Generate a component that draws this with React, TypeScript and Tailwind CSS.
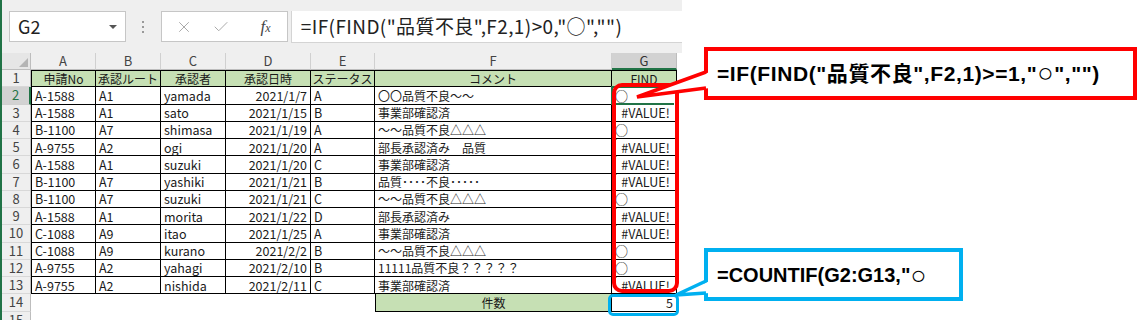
import React from 'react';
import { X, Check } from 'lucide-react';

// column widths in px, in the order A..G
const COLS = [
  { key: 'A', w: 'w-[65px]' },
  { key: 'B', w: 'w-[65px]' },
  { key: 'C', w: 'w-[65px]' },
  { key: 'D', w: 'w-[85px]' },
  { key: 'E', w: 'w-[64px]' },
  { key: 'F', w: 'w-[237px]' },
  { key: 'G', w: 'w-[65px]' },
];

const HEAD = ['申請No', '承認ルート', '承認者', '承認日時', 'ステータス', 'コメント', 'FIND'];

const ROWS: string[][] = [
  ['A-1588', 'A1', 'yamada', '2021/1/7', 'A', '〇〇品質不良～～', '○'],
  ['A-1588', 'A1', 'sato', '2021/1/15', 'B', '事業部確認済', '#VALUE!'],
  ['B-1100', 'A7', 'shimasa', '2021/1/19', 'A', '～～品質不良△△△', '○'],
  ['A-9755', 'A2', 'ogi', '2021/1/20', 'A', '部長承認済み　品質', '#VALUE!'],
  ['A-1588', 'A1', 'suzuki', '2021/1/20', 'C', '事業部確認済', '#VALUE!'],
  ['B-1100', 'A7', 'yashiki', '2021/1/21', 'B', '品質････不良･････', '#VALUE!'],
  ['B-1100', 'A7', 'suzuki', '2021/1/21', 'C', '～～品質不良△△△', '○'],
  ['A-1588', 'A1', 'morita', '2021/1/22', 'D', '部長承認済み', '#VALUE!'],
  ['C-1088', 'A9', 'itao', '2021/1/25', 'A', '事業部確認済', '#VALUE!'],
  ['C-1088', 'A9', 'kurano', '2021/2/2', 'B', '～～品質不良△△△', '○'],
  ['A-9755', 'A2', 'yahagi', '2021/2/10', 'B', '11111品質不良？？？？？', '○'],
  ['A-9755', 'A2', 'nishida', '2021/2/11', 'C', '事業部確認済', '#VALUE!'],
];

const FormulaBar = () => (
  <div className="h-[53px] bg-[#efefef] flex items-start pt-[11px] pl-[7px]">
    <div className="w-[117px] h-[31px] bg-white border border-[#c6c6c6] flex items-center justify-between pl-[8px] pr-[8px]">
      <span className="text-[18px] text-[#222]">G2</span>
      <span className="w-0 h-0 border-l-[4px] border-r-[4px] border-t-[4px] border-l-transparent border-r-transparent border-t-[#555]" />
    </div>
    <div className="w-[36px] h-[31px] flex flex-col items-center justify-center gap-[3px]">
      <span className="w-[2px] h-[2px] bg-[#999]" />
      <span className="w-[2px] h-[2px] bg-[#999]" />
      <span className="w-[2px] h-[2px] bg-[#999]" />
    </div>
    <div className="w-[127px] h-[31px] bg-white border border-[#c6c6c6] flex items-center">
      <div className="w-[40px] flex justify-center pl-[3px]">
        <X size={18} strokeWidth={1.3} color="#a8a8a8" />
      </div>
      <div className="w-[38px] flex justify-center">
        <Check size={18} strokeWidth={1.3} color="#a8a8a8" />
      </div>
      <div className="flex-1 flex justify-center pl-[4px] font-['Liberation_Serif',serif] italic text-[#444]">
        <span className="text-[17px]">f</span>
        <span className="text-[12px] mt-[5px]">x</span>
      </div>
    </div>
    <div className="ml-[3px] w-[393px] h-[32px] bg-white border-l border-b border-[#d4d4d4] flex items-center pl-[9px] text-[19px] tracking-[0.4px] text-[#222] whitespace-nowrap">
      =IF(FIND("品質不良",F2,1)&gt;0,"○","")
    </div>
  </div>
);

const ColHeader = () => (
  <div className="flex h-[17px] text-[13px] leading-[16px] text-[#444]">
    <div className="w-[29px] bg-[#e6e6e6] border-r border-b border-[#bdbdbd] relative">
      <svg className="absolute right-[2px] bottom-[2px]" width="9" height="9" viewBox="0 0 9 9">
        <polygon points="9,0 9,9 0,9" fill="#b4b4b4" />
      </svg>
    </div>
    {COLS.map((c) =>
      c.key === 'G' ? (
        <div key={c.key} className={`${c.w} bg-[#d2d2d2] border-r border-[#bdbdbd] border-b-2 border-b-[#217346] flex items-center justify-center text-[#333]`}>
          {c.key}
        </div>
      ) : (
        <div key={c.key} className={`${c.w} bg-[#efefef] border-r border-b border-[#d0d0d0] border-b-[#bdbdbd] flex items-center justify-center`}>
          {c.key}
        </div>
      )
    )}
  </div>
);

const RowHead = ({ n, selected }: { n: number; selected?: boolean }) =>
  selected ? (
    <div className="w-[29px] shrink-0 bg-[#d2d2d2] border-r-2 border-r-[#217346] border-b border-b-[#d0d0d0] flex items-center justify-center text-[13px] leading-[16px] text-[#217346]">
      {n}
    </div>
  ) : (
    <div className="w-[29px] shrink-0 bg-[#efefef] border-r border-r-[#bdbdbd] border-b border-b-[#d8d8d8] flex items-center justify-center text-[13px] leading-[16px] text-[#444]">
      {n}
    </div>
  );

const ErrFlag = () => (
  <svg className="absolute left-0 top-0" width="5" height="5" viewBox="0 0 5 5">
    <polygon points="0,0 5,0 0,5" fill="#1e7d32" />
  </svg>
);

export default function App() {
  return (
    <div className="w-[1140px] h-[320px] bg-white relative overflow-hidden font-['Noto_Sans_CJK_JP','Noto_Sans',sans-serif]">
      <div className="w-[682px] flex">
        <div className="w-[2px] h-[320px] bg-[#217346] shrink-0" />
        <div className="w-[680px]">
          <FormulaBar />
          <ColHeader />

          {/* row 1: headings */}
          <div className="flex h-[17.25px] text-[12px] leading-[15px] text-[#1a1a1a]">
            <RowHead n={1} />
            {COLS.map((c, i) => (
              <div
                key={c.key}
                className={`${c.w} bg-[#c6e0b4] border-t border-r border-b border-black ${i === 0 ? 'border-l' : ''} flex items-center justify-center whitespace-nowrap`}
              >
                {HEAD[i]}
              </div>
            ))}
          </div>

          {ROWS.map((r, ri) => (
            <div key={ri} className="flex h-[17.25px] text-[12.5px] leading-[15px] text-[#1a1a1a]">
              <RowHead n={ri + 2} selected={ri === 0} />
              {COLS.map((c, i) => {
                const v = r[i];
                const err = v === '#VALUE!';
                const align = i === 3 ? 'justify-end pr-[3px]' : err ? 'justify-center pl-[3px]' : 'justify-start pl-[3px]';
                return (
                  <div
                    key={c.key}
                    className={`${c.w} relative border-r border-b border-black ${i === 0 ? 'border-l' : ''} ${i === 5 ? 'text-[12px]' : ''} flex items-center ${align} whitespace-nowrap`}
                  >
                    {err && ri !== 1 && <ErrFlag />}
                    {v === '○' ? <span className="text-[13px]">○</span> : v}
                  </div>
                );
              })}
            </div>
          ))}

          {/* row 14: count */}
          <div className="flex h-[17.25px] text-[12px] leading-[15px] text-[#1a1a1a]">
            <RowHead n={14} />
            <div className="w-[344px]" />
            <div className="w-[237px] bg-[#c6e0b4] border-l border-r border-b border-black flex items-center justify-center">
              件数
            </div>
            <div className="w-[65px] border-r border-b border-black flex items-center justify-end pr-[3px] text-[12.5px]">
              5
            </div>
          </div>

          {/* row 15 (cut off by the screenshot edge) */}
          <div className="flex h-[17.25px]">
            <RowHead n={15} />
          </div>
        </div>
      </div>

      {/* G2 active-cell outline */}
      <div className="absolute left-[611px] top-[86px] w-[67px] h-[19px] border-2 border-[#217346]" />
      <div className="absolute left-[674px] top-[101px] w-[6px] h-[6px] bg-[#217346] border border-white" />

      {/* red marker around G2:G13 */}
      <div className="absolute left-[612px] top-[83px] w-[67px] h-[210px] border-[4px] border-[#ff0000] rounded-[10px]" />

      {/* red callout */}
      <div className="absolute left-[704px] top-[47px] w-[433px] h-[53px] bg-white border-[4px] border-[#ff0000] flex items-center pl-[9px] font-['Liberation_Sans','Noto_Sans_CJK_JP',sans-serif] font-bold text-[21px] tracking-[0.6px] text-black whitespace-nowrap">
        =IF(FIND("品質不良",F2,1)&gt;=1,"<span className="text-[27px] leading-none font-normal">○</span>","")
      </div>
      <svg className="absolute left-0 top-0 pointer-events-none" width="1140" height="320">
        <polygon points="710,72 637,97 710,88" fill="white" />
        <polyline points="706,72 637,97 706,88" fill="none" stroke="#ff0000" strokeWidth="3.5" strokeLinejoin="miter" />
      </svg>

      {/* blue marker around G14 */}
      <div className="absolute left-[608px] top-[294px] w-[71px] h-[22px] border-[3px] border-[#00b0f0] rounded-[5px]" />

      {/* blue callout */}
      <div className="absolute left-[704px] top-[248px] w-[259px] h-[53px] bg-white border-[4px] border-[#00b0f0] flex items-center pl-[9px] font-['Liberation_Sans','Noto_Sans_CJK_JP',sans-serif] font-bold text-[20px] text-black whitespace-nowrap">
        =COUNTIF(G2:G13,"<span className="text-[26px] leading-none font-normal">○</span>
      </div>
      <svg className="absolute left-0 top-0 pointer-events-none" width="1140" height="320">
        <polygon points="710,281 676,295 710,293" fill="white" />
        <polyline points="706,281 676,295 706,293" fill="none" stroke="#00b0f0" strokeWidth="3.5" strokeLinejoin="miter" />
      </svg>
    </div>
  );
}
